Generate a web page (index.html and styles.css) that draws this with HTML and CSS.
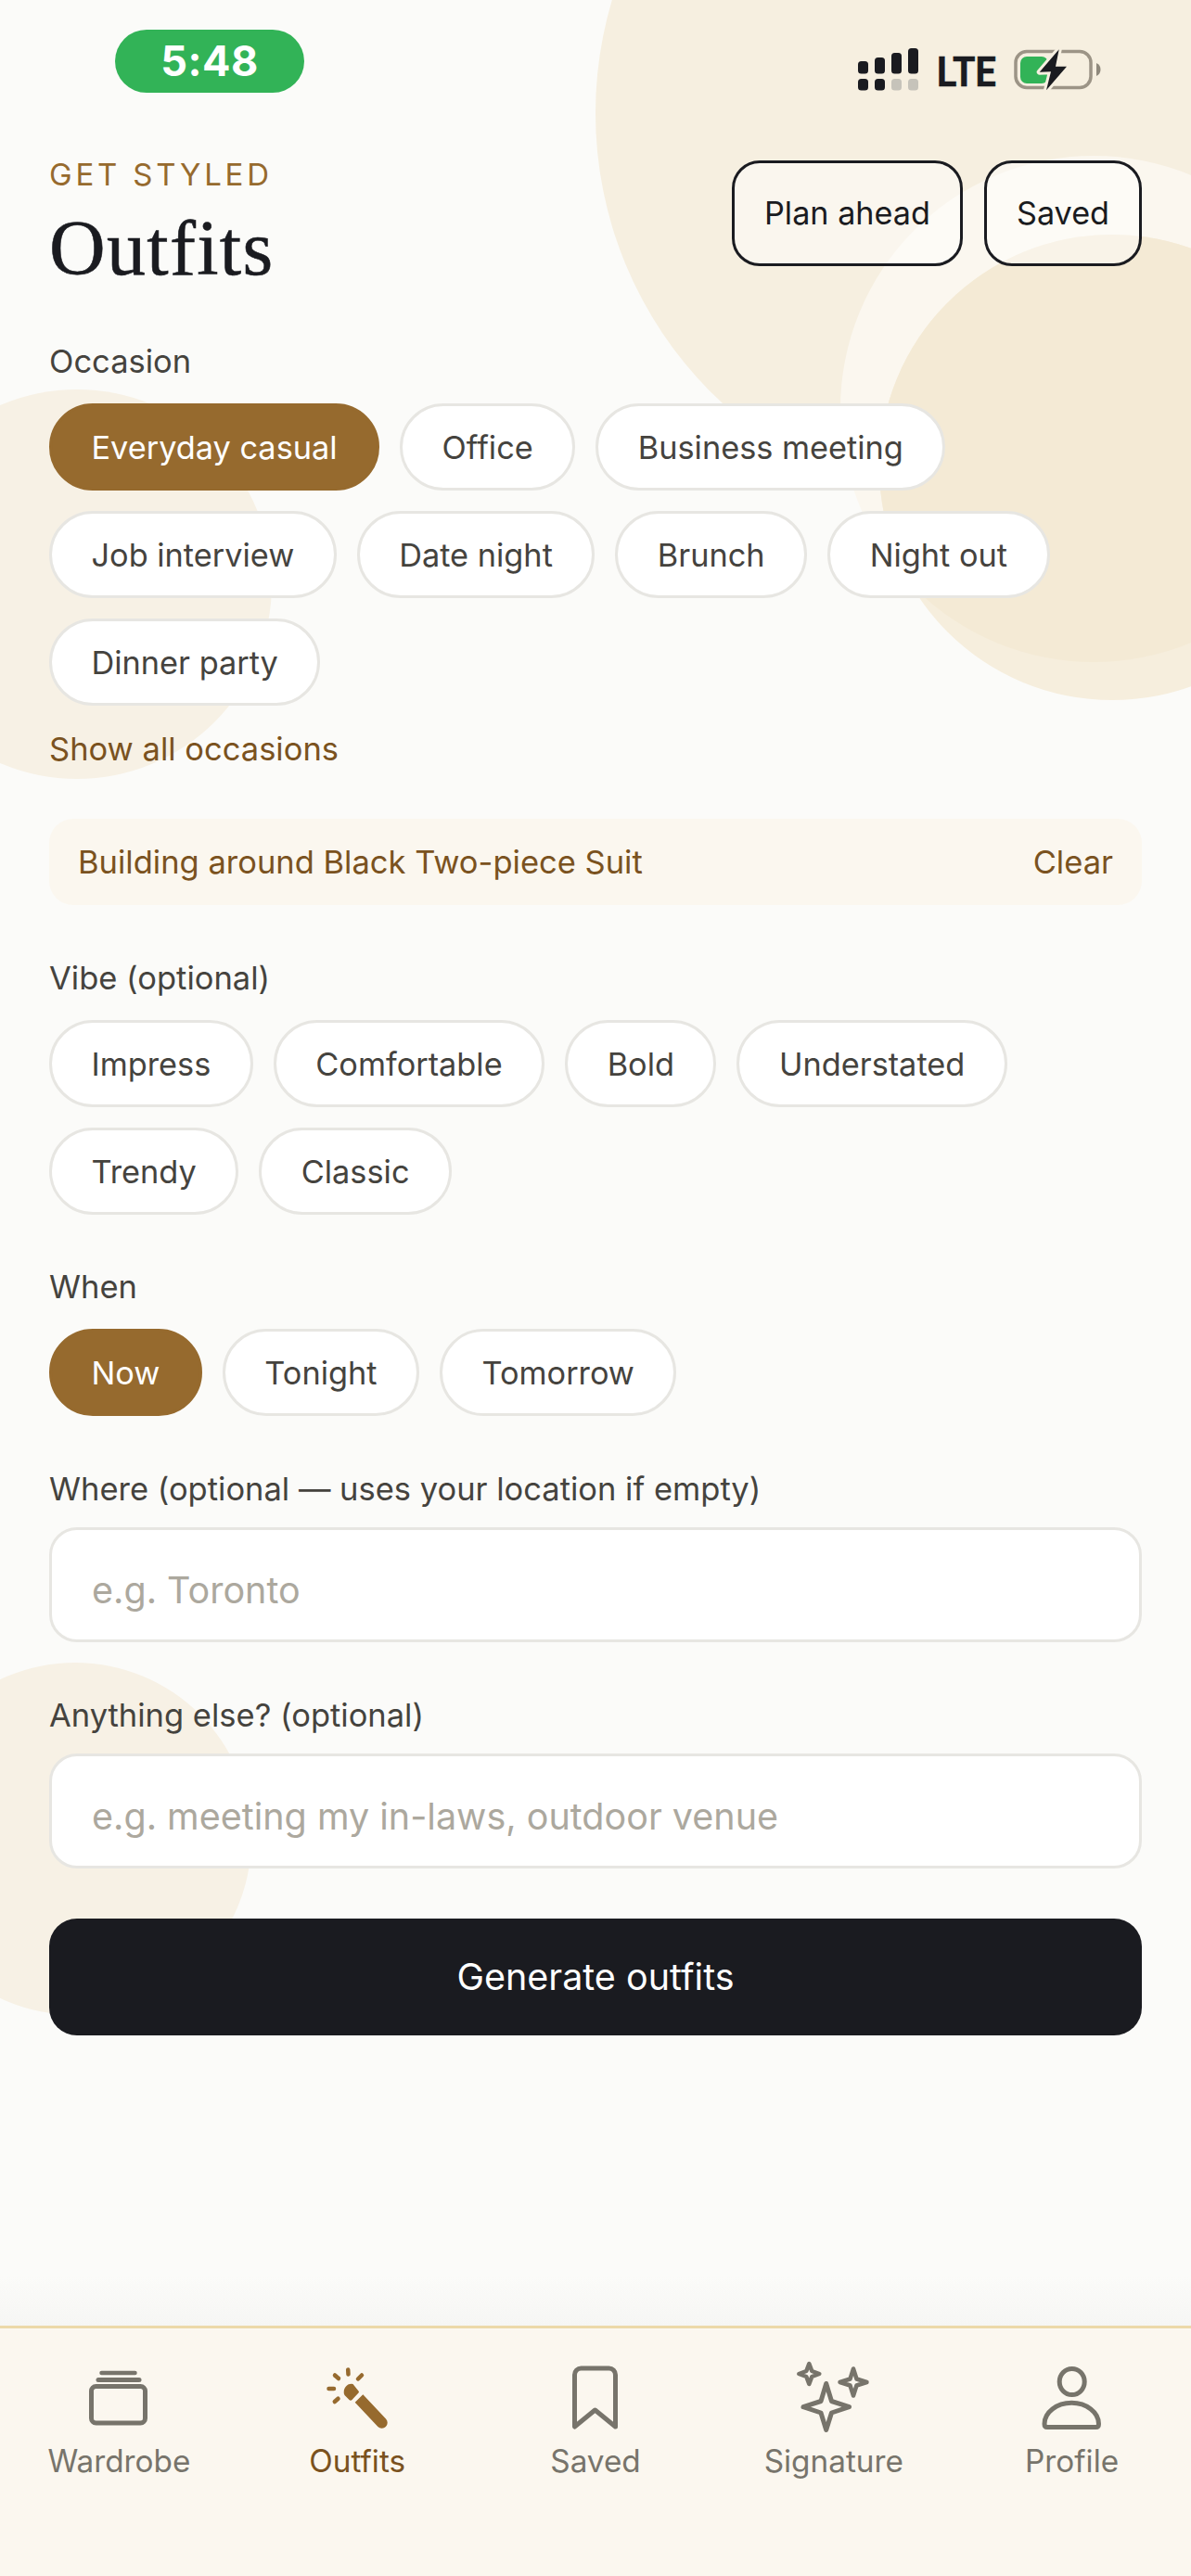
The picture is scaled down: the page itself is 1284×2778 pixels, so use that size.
FILE: index.html
```html
<!DOCTYPE html>
<html lang="en">
<head>
<meta charset="utf-8">
<title>Outfits</title>
<link rel="stylesheet" href="styles.css">
</head>
<body>
<div class="page">
  <div class="blob blob-a"></div>
  <div class="blob blob-c"></div>
  <div class="blob blob-d"><div class="blob-d-inner"></div></div>
  <div class="blob blob-left-top"></div>
  <div class="blob blob-left-bottom"></div>

  <div class="status">
    <div class="time">5:48</div>
    <div class="status-right">
      <svg class="signal" width="66" height="46" viewBox="0 0 66 46">
        <g fill="#1a1b20">
          <rect x="0" y="14" width="11" height="13.5" rx="3.5"/>
          <rect x="18" y="10" width="11" height="17.5" rx="3.5"/>
          <rect x="36" y="5" width="11" height="22.5" rx="3.5"/>
          <rect x="54" y="0" width="11" height="27.5" rx="3.5"/>
          <rect x="0" y="33" width="11" height="12.5" rx="3.5"/>
          <rect x="18" y="33" width="11" height="12.5" rx="3.5"/>
        </g>
        <g fill="#c6c3ba">
          <rect x="36" y="33" width="11" height="12.5" rx="3.5"/>
          <rect x="54" y="33" width="11" height="12.5" rx="3.5"/>
        </g>
      </svg>
      <span class="lte">LTE</span>
      <svg class="battery" width="100" height="50" viewBox="0 0 100 50">
        <rect x="5" y="5.5" width="81" height="39" rx="12" fill="none" stroke="#9c9486" stroke-width="3.5"/>
        <path d="M92 18 q4.5 2 4.5 7 t-4.5 7 z" fill="#8f897c"/>
        <rect x="10" y="11" width="30" height="29" rx="7" fill="#32b357"/>
        <path d="M51.7 3.3 L30.7 27.7 L43 27.3 L38 47.3 L60 21.7 L48 21.7 Z" fill="#1a1b20" stroke="#f6efe0" stroke-width="6" stroke-linejoin="round" paint-order="stroke"/>
      </svg>
    </div>
  </div>

  <main class="content">
    <header class="header">
      <div class="titles">
        <div class="eyebrow">GET STYLED</div>
        <h1 class="title">Outfits</h1>
      </div>
      <div class="actions">
        <button class="action">Plan ahead</button>
        <button class="action">Saved</button>
      </div>
    </header>

    <section class="group group-first">
      <div class="label">Occasion</div>
      <div class="chips">
        <span class="chip chip-on">Everyday casual</span>
        <span class="chip">Office</span>
        <span class="chip">Business meeting</span>
        <span class="chip">Job interview</span>
        <span class="chip">Date night</span>
        <span class="chip">Brunch</span>
        <span class="chip">Night out</span>
        <span class="chip">Dinner party</span>
      </div>
      <div class="more">Show all occasions</div>
    </section>

    <div class="banner">
      <span>Building around Black Two-piece Suit</span>
      <span>Clear</span>
    </div>

    <section class="group">
      <div class="label">Vibe (optional)</div>
      <div class="chips">
        <span class="chip">Impress</span>
        <span class="chip">Comfortable</span>
        <span class="chip">Bold</span>
        <span class="chip">Understated</span>
        <span class="chip">Trendy</span>
        <span class="chip">Classic</span>
      </div>
    </section>

    <section class="group group-when">
      <div class="label">When</div>
      <div class="chips">
        <span class="chip chip-on">Now</span>
        <span class="chip">Tonight</span>
        <span class="chip">Tomorrow</span>
      </div>
    </section>

    <section class="group">
      <label class="label label-field" for="where">Where (optional — uses your location if empty)</label>
      <input class="field" id="where" type="text" placeholder="e.g. Toronto">
    </section>

    <section class="group">
      <label class="label label-field" for="else">Anything else? (optional)</label>
      <input class="field" id="else" type="text" placeholder="e.g. meeting my in-laws, outdoor venue">
    </section>

    <button class="generate">Generate outfits</button>
  </main>

  <div class="nav-fade"></div>
  <nav class="nav">
    <div class="nav-item">
      <svg class="nav-icon" width="84" height="84" viewBox="0 0 84 84" fill="none" stroke="currentColor" stroke-linecap="round" stroke-linejoin="round">
        <path d="M23.5 19 H59.5" stroke-width="4.5"/>
        <path d="M20 26.5 H64" stroke-width="5"/>
        <rect x="12.5" y="33.5" width="58" height="39.5" rx="5" stroke-width="5"/>
      </svg>
      <span>Wardrobe</span>
    </div>
    <div class="nav-item nav-item-on">
      <svg class="nav-icon" width="84" height="84" viewBox="0 0 84 84">
        <g fill="#966a2e">
          <path d="M39.7 50.7 L48.3 42.3 L73 68.5 A6 6 0 0 1 64.4 76.9 Z"/>
          <path d="M28.5 43 A8.5 8.5 0 0 1 37.5 31 L43.5 38.5 Q44.5 39.5 43.5 40.5 L36.5 48 Q35 49.5 33.5 48 Z"/>
        </g>
        <g fill="none" stroke="#966a2e" stroke-width="4.5" stroke-linecap="round">
          <path d="M32.2 15.5 L32.5 20.5"/>
          <path d="M47 21.5 L43 25.5"/>
          <path d="M18 21.5 L22 25"/>
          <path d="M11.5 36 H17"/>
          <path d="M17.8 50 L21.5 46.7"/>
        </g>
      </svg>
      <span>Outfits</span>
    </div>
    <div class="nav-item">
      <svg class="nav-icon" width="84" height="84" viewBox="0 0 84 84" fill="none" stroke="currentColor" stroke-width="5" stroke-linejoin="round">
        <path d="M19.5 77 V21 a7 7 0 0 1 7 -7 H56.5 a7 7 0 0 1 7 7 V77 L41.5 59 Z"/>
      </svg>
      <span>Saved</span>
    </div>
    <div class="nav-item">
      <svg class="nav-icon" width="84" height="84" viewBox="0 0 84 84" fill="none" stroke="currentColor" stroke-linejoin="round">
        <path d="M33.7 30.5 L39.5 49.5 L58.5 55.7 L39.5 62 L33.7 80.5 L28 62 L9 55.7 L28 49.5 Z" stroke-width="5"/>
        <path d="M15.3 9 L18.3 17 L26.3 20 L18.3 23 L15.3 31 L12.3 23 L4.3 20 L12.3 17 Z" stroke-width="4.5"/>
        <path d="M63 14.5 L66.5 25.5 L77.5 29 L66.5 32.5 L63 43.5 L59.5 32.5 L48.5 29 L59.5 25.5 Z" stroke-width="4.5"/>
      </svg>
      <span>Signature</span>
    </div>
    <div class="nav-item">
      <svg class="nav-icon" width="84" height="84" viewBox="0 0 84 84" fill="none" stroke="currentColor" stroke-width="5" stroke-linejoin="round">
        <ellipse cx="41.7" cy="28.5" rx="13.5" ry="14"/>
        <path d="M12 74 a29 22.5 0 0 1 58.5 0 q0 3.5 -3 3.5 H15 q-3 0 -3 -3.5 Z"/>
      </svg>
      <span>Profile</span>
    </div>
  </nav>
</div>
</body>
</html>
```
FILE: styles.css
```css
* { box-sizing: border-box; }
html, body { margin: 0; padding: 0; }
body { font-family: Inter, "Noto Sans", sans-serif; color: #45433e; }

.page {
  position: relative;
  width: 1284px;
  height: 2778px;
  overflow: hidden;
  background: #fbfbf9;
  display: flex;
  flex-direction: column;
  font-size: 34.5px;
  line-height: 40px;
}

/* decorative circles behind content */
.blob { position: absolute; border-radius: 50%; overflow: hidden; }
.blob-a { left: 642px; top: -304px; width: 852px; height: 852px; background: #f6efe0; }
.blob-c { left: 906px; top: 168px; width: 546px; height: 546px; background: #fbf7ef; }
.blob-d { left: 948px; top: 253px; width: 502px; height: 502px; background: #f6eedd; }
.blob-d-inner { position: absolute; left: -42px; top: -85px; width: 546px; height: 546px; border-radius: 50%; background: #f4ead5; }
.blob-left-top { left: -127px; top: 420px; width: 420px; height: 420px; background: #f7f1e5; }
.blob-left-bottom { left: -109px; top: 1793px; width: 380px; height: 380px; background: #f7f1e5; }

/* status bar */
.status {
  position: relative;
  height: 173px;
  flex: none;
  display: flex;
  justify-content: space-between;
  align-items: flex-start;
  padding: 32px 94px 0 124px;
}
.time {
  width: 204px;
  height: 68px;
  border-radius: 34px;
  background: #32b357;
  color: #fff;
  font-size: 45px;
  font-weight: 700;
  line-height: 68px;
  letter-spacing: 0.5px;
  text-align: center;
}
.status-right { display: flex; align-items: center; margin-top: 18px; }
.signal { display: block; margin-right: 19px; }
.lte {
  font-family: Roboto, sans-serif;
  font-weight: 700;
  font-size: 45px;
  line-height: 50px;
  color: #1a1b20;
  -webkit-text-stroke: 0.5px #1a1b20;
  width: 63px;
  display: inline-block;
  transform: translateY(3px) scaleX(0.88);
  transform-origin: left center;
  margin-right: 17px;
}
.battery { display: block; }

/* main */
.content { position: relative; flex: 1; padding: 0 53px; }
.header { display: flex; justify-content: space-between; align-items: flex-start; height: 134px; }
.eyebrow { font-size: 33px; line-height: 31px; letter-spacing: 3.8px; color: #966a2e; }
.title {
  margin: 24px 0 0;
  font-family: "Liberation Serif", serif;
  font-weight: 400;
  font-size: 84px;
  line-height: 80px;
  letter-spacing: 1.3px;
  -webkit-text-stroke: 0.6px #1a1b20;
  color: #1a1b20;
}
.actions { display: flex; gap: 23px; }
.action {
  height: 114px;
  padding: 0 32px;
  border: 3px solid #1a1b20;
  border-radius: 30px;
  background: rgba(255, 255, 255, 0.45);
  color: #1a1b20;
  font: 400 34.2px/40px Inter, sans-serif;
}

.group { margin-top: 59px; }
.group-first { margin-top: 63px; }
.group-when { margin-top: 58px; }
.label { display: block; margin-bottom: 25px; color: #45433e; }
.label-field { margin-bottom: 21px; }

.chips { display: flex; flex-wrap: wrap; gap: 22px; }
.chip {
  height: 94px;
  padding: 1px 42.5px 0;
  border: 3px solid #e7e6e2;
  border-radius: 47px;
  background: #fff;
  color: #45433e;
  font-size: 34.3px;
  display: flex;
  align-items: center;
}
.chip-on { background: #966a2e; border-color: #966a2e; color: #fff; }

.more { margin-top: 27px; color: #7a5220; }

.banner {
  margin-top: 55px;
  height: 93px;
  padding: 0 31px;
  border-radius: 26px;
  background: #fbf7ef;
  color: #7a5220;
  display: flex;
  justify-content: space-between;
  align-items: center;
}

.field {
  display: block;
  width: 100%;
  height: 124px;
  padding: 12px 43px 0;
  border: 3px solid #e7e6e2;
  border-radius: 30px;
  background: #fff;
  color: #45433e;
  font: 400 39.5px/46px Inter, sans-serif;
}
.field::placeholder { color: #aca89e; opacity: 1; }

.generate {
  display: block;
  width: 100%;
  height: 126px;
  margin-top: 54px;
  border: 0;
  border-radius: 30px;
  background: #1a1b20;
  color: #fff;
  font: 400 39.5px/46px Inter, sans-serif;
}

/* bottom navigation */
.nav-fade { position: relative; flex: none; height: 53px; background: linear-gradient(rgba(246, 246, 244, 0), #f6f6f4); }
.nav {
  position: relative;
  flex: none;
  height: 270px;
  padding-top: 29px;
  border-top: 3px solid #ecd9a9;
  background: #fbf7ef;
  display: grid;
  grid-template-columns: repeat(5, 1fr);
  align-items: start;
  font-size: 33.3px;
}
.nav-item { display: flex; flex-direction: column; align-items: center; gap: 10px; color: #77746b; }
.nav-item-on { color: #7a5220; }
.nav-icon { display: block; }
```
